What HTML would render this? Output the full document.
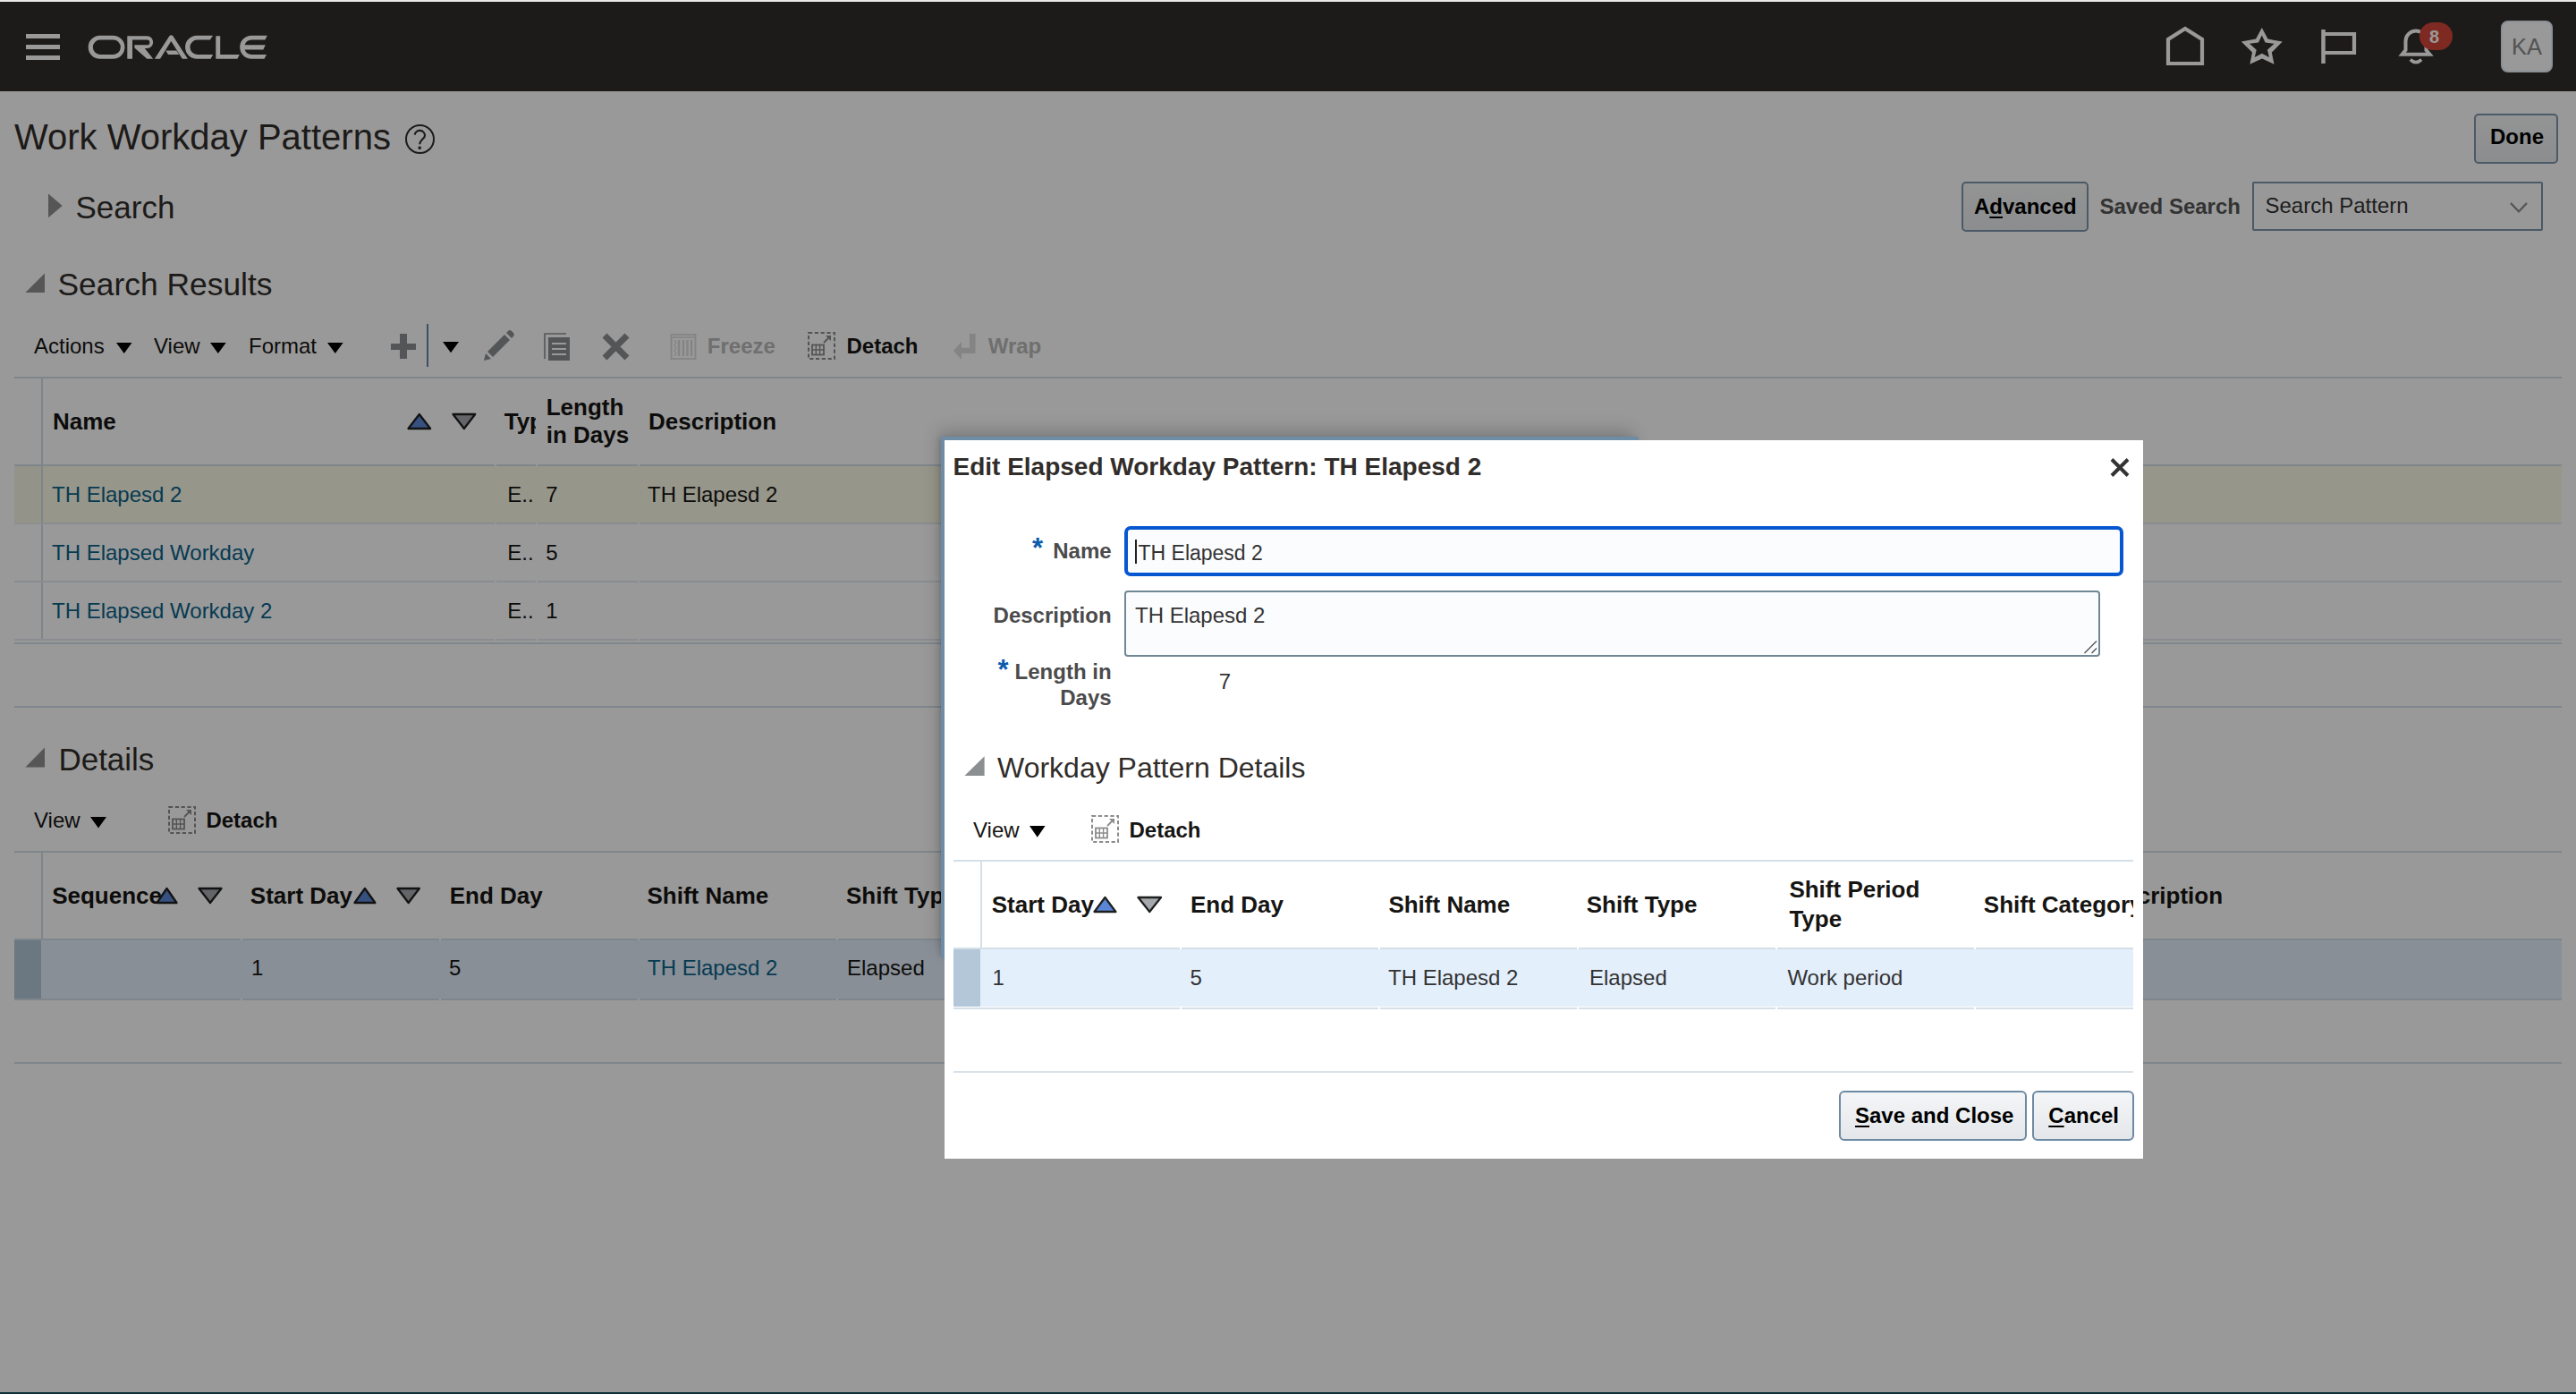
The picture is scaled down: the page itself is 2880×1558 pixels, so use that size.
<!DOCTYPE html>
<html><head><meta charset="utf-8"><title>Work Workday Patterns</title>
<style>
html,body{margin:0;padding:0;}
body{width:2880px;height:1558px;position:relative;overflow:hidden;background:#fff;font-family:'Liberation Sans', sans-serif;}
.t{position:absolute;white-space:nowrap;}
#page{position:absolute;left:0;top:0;width:2880px;height:1558px;}
</style></head><body>
<div id="page"><div style="position:absolute;left:0px;top:0px;width:2880px;height:102px;background:#312d2a"></div><div style="position:absolute;left:29px;top:38px;width:38px;height:4.5px;background:#fff"></div><div style="position:absolute;left:29px;top:50px;width:38px;height:4.5px;background:#fff"></div><div style="position:absolute;left:29px;top:62px;width:38px;height:4.5px;background:#fff"></div><svg style="position:absolute;left:98px;top:39px;" width="204" height="28" viewBox="0 0 204 28"><g fill="#fff">
<path fill-rule="evenodd" d="M13.7 0.74 H28.4 A13.03 13.03 0 0 1 28.4 26.8 H13.7 A13.03 13.03 0 0 1 13.7 0.74 Z M14 5.6 H28.7 A8.15 8.15 0 0 1 28.7 21.9 H14 A8.15 8.15 0 0 1 14 5.6 Z"/>
<path d="M44.3 1.15 H66.5 A6.93 6.93 0 0 1 66.5 15 H63.8 L73.2 26.8 H66.3 L52.4 14.6 V11.3 H66.5 A2.85 2.85 0 0 0 66.5 5.6 H50 V26.8 H44.3 Z"/>
<path d="M74.85 26.8 L91.4 1.2 Q93.4 -0.8 95.4 1.2 L111.9 26.8 H105.8 L93.3 6.9 L81 26.8 Z"/>
<path d="M87.3 17.5 H99.3 L102.2 21.9 H90 Z"/>
<path d="M140.1 0.74 H122.1 A13.03 13.03 0 0 0 122.1 26.8 H137.6 L140.1 21.9 H122.6 A8.15 8.15 0 0 1 122.6 5.6 H136.8 Z"/>
<path d="M143.3 1.15 H148.2 V21.9 H169.8 L167.4 26.8 H143.3 Z"/>
<path d="M200.8 0.74 H183.2 A13.03 13.03 0 0 0 183.2 26.8 H197.5 L200 21.9 H183.3 A8.15 8.15 0 0 1 175.6 16.6 H196.3 L198.8 11.3 H175.6 A8.15 8.15 0 0 1 183.3 5.6 H198.4 Z"/>
</g></svg><svg style="position:absolute;left:2418px;top:28px;" width="50" height="48" viewBox="0 0 50 48"><path d="M6 43 V16 L25 4 L44 16 V43 Z" fill="none" stroke="#fff" stroke-width="4.2"/></svg><svg style="position:absolute;left:2503px;top:28px;" width="52" height="48" viewBox="0 0 52 48"><path d="M25.80 3.10 L32.50 15.60 L48.80 18.50 L36.80 30.60 L39.50 43.80 L26.00 37.60 L12.40 43.80 L15.00 30.60 L2.80 18.50 L19.10 15.60 Z M25.80 11.58 L29.55 19.43 L39.60 20.82 L31.96 27.83 L34.02 36.00 L25.91 31.75 L17.76 36.00 L19.75 27.83 L12.00 20.82 L22.05 19.43 Z" fill="#fff" fill-rule="evenodd"/></svg><svg style="position:absolute;left:2592px;top:30px;" width="46" height="44" viewBox="0 0 46 44"><path d="M5.5 3 V41" stroke="#fff" stroke-width="4.5"/><path d="M7 8 H40 V29 H7" fill="none" stroke="#fff" stroke-width="4.2"/></svg><svg style="position:absolute;left:2680px;top:28px;" width="44" height="46" viewBox="0 0 44 46"><path d="M5.6 32.8 L9.5 28 V18 A11.5 11.5 0 0 1 32.5 18 V28 L36.5 32.8 Z" fill="none" stroke="#fff" stroke-width="4" stroke-linejoin="miter"/><path d="M14.8 38.6 Q21 44.6 27.2 38.6" fill="none" stroke="#fff" stroke-width="3.6"/></svg><div style="position:absolute;left:2705px;top:25px;width:37px;height:31px;border-radius:16px;background:#d3473a"></div><div class="t" style="left:2716.0px;top:31.1px;font-size:20px;line-height:20px;font-weight:700;color:#fff;">8</div><div style="position:absolute;left:2796px;top:23px;width:54px;height:54px;border-radius:8px;background:#fff;border:2px solid #e8f0f8"></div><div class="t" style="left:2808.0px;top:39.6px;font-size:25.5px;line-height:25.5px;font-weight:400;color:#8a8a8a;">KA</div><div class="t" style="left:16.0px;top:133.1px;font-size:40px;line-height:40px;font-weight:400;color:#312d2a;">Work Workday Patterns</div><div style="position:absolute;left:453px;top:139px;width:29px;height:29px;border-radius:50%;border:2.2px solid #312d2a"></div><svg style="position:absolute;left:459px;top:141px;" width="22" height="30" viewBox="0 0 22 30"><path d="M4.7 9.6 A5.7 5.7 0 0 1 16 10.4 C16 14.2 10.2 15.2 10.2 20.3" fill="none" stroke="#312d2a" stroke-width="2.2"/><path d="M10.2 22.1 L12.4 24.3 L10.2 26.5 L8 24.3 Z" fill="#312d2a"/></svg><div style="position:absolute;left:2766px;top:127px;width:90px;height:52px;border:2px solid #7d96ab;border-radius:5px;background:linear-gradient(#f6f7f8,#e9ebed)"></div><div class="t" style="left:2784.0px;top:141.2px;font-size:24px;line-height:24px;font-weight:700;color:#000;">Done</div><svg style="position:absolute;left:50px;top:214px;" width="24" height="32" viewBox="0 0 24 32"><path d="M4 2.6 L19.7 16 L4 29.3 Z" fill="#8f8f8f"/></svg><div class="t" style="left:84.5px;top:213.7px;font-size:35px;line-height:35px;font-weight:400;color:#312d2a;">Search</div><div style="position:absolute;left:2193px;top:203px;width:138px;height:52px;border:2px solid #7d96ab;border-radius:5px;background:linear-gradient(#f6f7f8,#e9ebed)"></div><div class="t" style="left:2207.0px;top:218.7px;font-size:24px;line-height:24px;font-weight:700;color:#000;">A<u style="text-underline-offset:3px">d</u>vanced</div><div class="t" style="left:2347.5px;top:218.7px;font-size:24px;line-height:24px;font-weight:700;color:#555;">Saved Search</div><div style="position:absolute;left:2518px;top:203px;width:321px;height:51px;border:2px solid #7d96ab;border-radius:2px;background:#fdfdfd"></div><div class="t" style="left:2532.5px;top:217.9px;font-size:24px;line-height:24px;font-weight:400;color:#333;">Search Pattern</div><svg style="position:absolute;left:2804px;top:224px;" width="24" height="18" viewBox="0 0 24 18"><path d="M3 3 L12 12.5 L21 3" fill="none" stroke="#8a8a8a" stroke-width="2.2"/></svg><svg style="position:absolute;left:26px;top:303px;" width="28" height="28" viewBox="0 0 28 28"><path d="M24 2.6 V24 H2.4 Z" fill="#8f8f8f"/></svg><div class="t" style="left:64.5px;top:300.8px;font-size:35.4px;line-height:35.4px;font-weight:400;color:#312d2a;">Search Results</div><div class="t" style="left:38.0px;top:374.9px;font-size:24px;line-height:24px;font-weight:400;color:#161513;">Actions</div><svg style="position:absolute;left:129px;top:382px;" width="19.5" height="14" viewBox="0 0 19.5 14"><path d="M1 1 H18.5 L9.75 13 Z" fill="#000"/></svg><div class="t" style="left:172.0px;top:374.9px;font-size:24px;line-height:24px;font-weight:400;color:#161513;">View</div><svg style="position:absolute;left:234px;top:382px;" width="19.69999999999999" height="14" viewBox="0 0 19.69999999999999 14"><path d="M1 1 H18.69999999999999 L9.849999999999994 13 Z" fill="#000"/></svg><div class="t" style="left:278.0px;top:374.9px;font-size:24px;line-height:24px;font-weight:400;color:#161513;">Format</div><svg style="position:absolute;left:365px;top:382px;" width="19.600000000000023" height="14" viewBox="0 0 19.600000000000023 14"><path d="M1 1 H18.600000000000023 L9.800000000000011 13 Z" fill="#000"/></svg><div style="position:absolute;left:437px;top:383.5px;width:28px;height:7.3px;background:#8b8e91"></div><div style="position:absolute;left:447px;top:373.3px;width:8px;height:27.7px;background:#8b8e91"></div><div style="position:absolute;left:477px;top:362px;width:2px;height:47.5px;background:#6684a5"></div><svg style="position:absolute;left:494px;top:380.7px;" width="20" height="14.300000000000011" viewBox="0 0 20 14.300000000000011"><path d="M1 1 H19 L10.0 13.300000000000011 Z" fill="#000"/></svg><svg style="position:absolute;left:538px;top:368px;" width="38" height="38" viewBox="0 0 38 38"><path d="M7 25 L26 6 L32 12 L13 31 Z" fill="#8b8e91"/><path d="M28 4 L30 2 A3 3 0 0 1 34 2 L36 4 A3 3 0 0 1 36 8 L34 10 Z" fill="#8b8e91"/><path d="M5 27 L11 33 L3 35 Z" fill="#8b8e91"/></svg><svg style="position:absolute;left:607px;top:371px;" width="32" height="34" viewBox="0 0 32 34"><path d="M2 30 V2 H26" fill="none" stroke="#8b8e91" stroke-width="1.6"/><rect x="6" y="6" width="24" height="26" fill="#8b8e91"/><path d="M10 13 H26 M10 19 H26 M10 25 H26" stroke="#fff" stroke-width="2"/></svg><svg style="position:absolute;left:672px;top:371px;" width="34" height="33" viewBox="0 0 34 33"><path d="M4 4 L29 29 M29 4 L4 29" stroke="#8b8e91" stroke-width="7"/></svg><svg style="position:absolute;left:749px;top:372px;" width="30" height="30" viewBox="0 0 30 30"><rect x="1.5" y="2" width="27" height="27" fill="none" stroke="#dcdcdc" stroke-width="1.8"/><path d="M1.5 5 H28.5" stroke="#dcdcdc" stroke-width="1.5"/><path d="M10 8 V26 M15 8 V26 M19.5 8 V26 M24 8 V26" stroke="#dcdcdc" stroke-width="2.4"/><path d="M5 8 L7 11 L5 14 L7 17 L5 20 L7 23 L5 26" fill="none" stroke="#dcdcdc" stroke-width="1.2"/></svg><div class="t" style="left:790.8px;top:374.9px;font-size:24px;line-height:24px;font-weight:700;color:#b9b9b9;">Freeze</div><svg style="position:absolute;left:903px;top:371px;" width="31" height="31" viewBox="0 0 31 31"><rect x="1" y="1" width="29" height="29" fill="none" stroke="#8c8c8c" stroke-width="2" stroke-dasharray="4.2 2.6"/><rect x="5" y="14.5" width="13" height="11" fill="none" stroke="#8c8c8c" stroke-width="1.8"/><path d="M9.3 14.5 V25.5 M13.6 14.5 V25.5 M5 20 H18" stroke="#8c8c8c" stroke-width="1.4"/><path d="M18 12 L25 5" stroke="#8c8c8c" stroke-width="1.8"/><path d="M20 4 H26 V10 Z" fill="#8c8c8c"/></svg><div class="t" style="left:946.5px;top:374.9px;font-size:24px;line-height:24px;font-weight:700;color:#161513;">Detach</div><svg style="position:absolute;left:1064px;top:372px;" width="30" height="30" viewBox="0 0 30 30"><path d="M20 1 H26.5 V23 H10 V16.7 H20 Z" fill="#dcdcdc"/><path d="M2 20 L11 10 V30 Z" fill="#dcdcdc"/></svg><div class="t" style="left:1104.7px;top:374.9px;font-size:24px;line-height:24px;font-weight:700;color:#b9b9b9;">Wrap</div><div style="position:absolute;left:16px;top:421px;width:2848px;height:2px;background:#d3dfea"></div><div style="position:absolute;left:46px;top:422px;width:2px;height:293px;background:#d3dfea"></div><div style="position:absolute;left:16px;top:519px;width:2848px;height:2px;background:#d3dfea"></div><div style="position:absolute;left:16px;top:521px;width:2848px;height:64px;background:#fbfae6"></div><div style="position:absolute;left:16px;top:584px;width:2848px;height:2px;background:#e4eaf0"></div><div style="position:absolute;left:16px;top:649px;width:2848px;height:2px;background:#e4eaf0"></div><div style="position:absolute;left:16px;top:714px;width:2848px;height:2px;background:#e4eaf0"></div><div style="position:absolute;left:16px;top:718px;width:2848px;height:2px;background:#d3dfea"></div><div style="position:absolute;left:16px;top:789px;width:2848px;height:2px;background:#d3dfea"></div><div style="position:absolute;left:46px;top:521px;width:2px;height:64px;background:#d3dfea"></div><div style="position:absolute;left:16px;top:521px;width:30px;height:64px;background:#f5f6e6"></div><div style="position:absolute;left:553px;top:519px;width:2px;height:2px;background:#fff"></div><div style="position:absolute;left:553px;top:584px;width:2px;height:2px;background:#fff"></div><div style="position:absolute;left:553px;top:649px;width:2px;height:2px;background:#fff"></div><div style="position:absolute;left:553px;top:714px;width:2px;height:2px;background:#fff"></div><div style="position:absolute;left:599px;top:519px;width:2px;height:2px;background:#fff"></div><div style="position:absolute;left:599px;top:584px;width:2px;height:2px;background:#fff"></div><div style="position:absolute;left:599px;top:649px;width:2px;height:2px;background:#fff"></div><div style="position:absolute;left:599px;top:714px;width:2px;height:2px;background:#fff"></div><div style="position:absolute;left:713px;top:519px;width:2px;height:2px;background:#fff"></div><div style="position:absolute;left:713px;top:584px;width:2px;height:2px;background:#fff"></div><div style="position:absolute;left:713px;top:649px;width:2px;height:2px;background:#fff"></div><div style="position:absolute;left:713px;top:714px;width:2px;height:2px;background:#fff"></div><div class="t" style="left:59.0px;top:458.0px;font-size:26px;line-height:26px;font-weight:700;color:#161513;">Name</div><svg style="position:absolute;left:453px;top:460px;" width="31.600000000000023" height="22" viewBox="0 0 31.600000000000023 22"><path d="M15.800000000000011 3 L28.100000000000023 19 H3.5 Z" fill="#5b86d6" stroke="#1f1f1f" stroke-width="2.3" stroke-linejoin="round"/></svg><svg style="position:absolute;left:503px;top:460px;" width="31.700000000000045" height="22" viewBox="0 0 31.700000000000045 22"><path d="M3.5 3 H28.200000000000045 L15.850000000000023 19 Z" fill="#a5a9ad" stroke="#1f1f1f" stroke-width="2.3" stroke-linejoin="round"/></svg><div style="position:absolute;left:553px;top:440px;width:46px;height:60px;overflow:hidden"><div class="t" style="left:10.7px;top:18px;font-size:26px;line-height:26px;font-weight:700;color:#161513">Type</div></div><div class="t" style="left:610.7px;top:441.5px;font-size:26px;line-height:26px;font-weight:700;color:#161513;">Length</div><div class="t" style="left:610.7px;top:473.0px;font-size:26px;line-height:26px;font-weight:700;color:#161513;">in Days</div><div class="t" style="left:725.0px;top:458.0px;font-size:26px;line-height:26px;font-weight:700;color:#161513;">Description</div><div class="t" style="left:58.0px;top:541.2px;font-size:24px;line-height:24px;font-weight:400;color:#0a6389;">TH Elapesd 2</div><div class="t" style="left:567.3px;top:541.2px;font-size:24px;line-height:24px;font-weight:400;color:#161513;">E..</div><div class="t" style="left:610.3px;top:541.2px;font-size:24px;line-height:24px;font-weight:400;color:#161513;">7</div><div class="t" style="left:58.0px;top:606.2px;font-size:24px;line-height:24px;font-weight:400;color:#0a6389;">TH Elapsed Workday</div><div class="t" style="left:567.3px;top:606.2px;font-size:24px;line-height:24px;font-weight:400;color:#161513;">E..</div><div class="t" style="left:610.3px;top:606.2px;font-size:24px;line-height:24px;font-weight:400;color:#161513;">5</div><div class="t" style="left:58.0px;top:671.2px;font-size:24px;line-height:24px;font-weight:400;color:#0a6389;">TH Elapsed Workday 2</div><div class="t" style="left:567.3px;top:671.2px;font-size:24px;line-height:24px;font-weight:400;color:#161513;">E..</div><div class="t" style="left:610.3px;top:671.2px;font-size:24px;line-height:24px;font-weight:400;color:#161513;">1</div><div class="t" style="left:724.0px;top:541.2px;font-size:24px;line-height:24px;font-weight:400;color:#161513;">TH Elapesd 2</div><svg style="position:absolute;left:26px;top:833px;" width="28" height="28" viewBox="0 0 28 28"><path d="M24 2.4 V24.4 H2.4 Z" fill="#8f8f8f"/></svg><div class="t" style="left:65.4px;top:831.2px;font-size:35px;line-height:35px;font-weight:400;color:#312d2a;">Details</div><div class="t" style="left:38.0px;top:904.5px;font-size:24px;line-height:24px;font-weight:400;color:#161513;">View</div><svg style="position:absolute;left:100px;top:911.5px;" width="20" height="14.5" viewBox="0 0 20 14.5"><path d="M1 1 H19 L10.0 13.5 Z" fill="#000"/></svg><svg style="position:absolute;left:188px;top:901px;" width="31" height="31" viewBox="0 0 31 31"><rect x="1" y="1" width="29" height="29" fill="none" stroke="#8c8c8c" stroke-width="2" stroke-dasharray="4.2 2.6"/><rect x="5" y="14.5" width="13" height="11" fill="none" stroke="#8c8c8c" stroke-width="1.8"/><path d="M9.3 14.5 V25.5 M13.6 14.5 V25.5 M5 20 H18" stroke="#8c8c8c" stroke-width="1.4"/><path d="M18 12 L25 5" stroke="#8c8c8c" stroke-width="1.8"/><path d="M20 4 H26 V10 Z" fill="#8c8c8c"/></svg><div class="t" style="left:230.4px;top:904.5px;font-size:24px;line-height:24px;font-weight:700;color:#161513;">Detach</div><div style="position:absolute;left:16px;top:951px;width:2848px;height:2px;background:#d3dfea"></div><div style="position:absolute;left:46px;top:952px;width:2px;height:98px;background:#d3dfea"></div><div style="position:absolute;left:16px;top:1049px;width:2848px;height:2px;background:#d3dfea"></div><div style="position:absolute;left:16px;top:1051px;width:2848px;height:65px;background:#e4effc"></div><div style="position:absolute;left:16px;top:1051px;width:30px;height:65px;background:#b3c7d8"></div><div style="position:absolute;left:16px;top:1116px;width:2848px;height:2px;background:#d3dfea"></div><div style="position:absolute;left:16px;top:1187px;width:2848px;height:2px;background:#d3dfea"></div><div style="position:absolute;left:269px;top:1049px;width:2px;height:2px;background:#fff"></div><div style="position:absolute;left:269px;top:1116px;width:2px;height:2px;background:#fff"></div><div style="position:absolute;left:491px;top:1049px;width:2px;height:2px;background:#fff"></div><div style="position:absolute;left:491px;top:1116px;width:2px;height:2px;background:#fff"></div><div style="position:absolute;left:713px;top:1049px;width:2px;height:2px;background:#fff"></div><div style="position:absolute;left:713px;top:1116px;width:2px;height:2px;background:#fff"></div><div style="position:absolute;left:935px;top:1049px;width:2px;height:2px;background:#fff"></div><div style="position:absolute;left:935px;top:1116px;width:2px;height:2px;background:#fff"></div><div class="t" style="left:58.2px;top:987.5px;font-size:26px;line-height:26px;font-weight:700;color:#161513;">Sequence</div><svg style="position:absolute;left:171.6px;top:990px;" width="29.0" height="22" viewBox="0 0 29.0 22"><path d="M14.5 3 L25.5 19 H3.5 Z" fill="#5b86d6" stroke="#1f1f1f" stroke-width="2.3" stroke-linejoin="round"/></svg><svg style="position:absolute;left:219px;top:990px;" width="32" height="22" viewBox="0 0 32 22"><path d="M3.5 3 H28.5 L16.0 19 Z" fill="#a5a9ad" stroke="#1f1f1f" stroke-width="2.3" stroke-linejoin="round"/></svg><div class="t" style="left:279.8px;top:987.5px;font-size:26px;line-height:26px;font-weight:700;color:#161513;">Start Day</div><svg style="position:absolute;left:392.5px;top:990px;" width="29.899999999999977" height="22" viewBox="0 0 29.899999999999977 22"><path d="M14.949999999999989 3 L26.399999999999977 19 H3.5 Z" fill="#5b86d6" stroke="#1f1f1f" stroke-width="2.3" stroke-linejoin="round"/></svg><svg style="position:absolute;left:441.3px;top:990px;" width="31.30000000000001" height="22" viewBox="0 0 31.30000000000001 22"><path d="M3.5 3 H27.80000000000001 L15.650000000000006 19 Z" fill="#a5a9ad" stroke="#1f1f1f" stroke-width="2.3" stroke-linejoin="round"/></svg><div class="t" style="left:502.7px;top:987.5px;font-size:26px;line-height:26px;font-weight:700;color:#161513;">End Day</div><div class="t" style="left:723.5px;top:987.5px;font-size:26px;line-height:26px;font-weight:700;color:#161513;">Shift Name</div><div class="t" style="left:946.0px;top:987.5px;font-size:26px;line-height:26px;font-weight:700;color:#161513;">Shift Type</div><div class="t" style="left:2342.0px;top:987.5px;font-size:26px;line-height:26px;font-weight:700;color:#161513;">Description</div><div class="t" style="left:281.0px;top:1070.1px;font-size:24px;line-height:24px;font-weight:400;color:#161513;">1</div><div class="t" style="left:502.0px;top:1070.1px;font-size:24px;line-height:24px;font-weight:400;color:#161513;">5</div><div class="t" style="left:724.0px;top:1070.1px;font-size:24px;line-height:24px;font-weight:400;color:#0a6389;">TH Elapesd 2</div><div class="t" style="left:947.0px;top:1070.1px;font-size:24px;line-height:24px;font-weight:400;color:#161513;">Elapsed</div></div><div style="position:absolute;left:0px;top:0px;width:2880px;height:1558px;background:rgba(0,0,0,0.4)"></div><div style="position:absolute;left:0px;top:0px;width:2880px;height:2px;background:#e9e9e9"></div><div style="position:absolute;left:0px;top:1556px;width:2880px;height:2px;background:#0a2f36"></div><div style="position:absolute;left:1052px;top:488px;width:776px;height:578px;border:4px solid #6f8ca6;border-right:none;border-bottom:none;box-shadow:-4px -8px 18px -2px rgba(0,0,0,0.2),-3px 0 5px -1px rgba(0,0,0,0.12)"></div><div style="position:absolute;left:1056px;top:492px;width:1340px;height:803px;background:#fff"></div><div class="t" style="left:1065.5px;top:508.3px;font-size:28px;line-height:28px;font-weight:700;color:#312d2a;">Edit Elapsed Workday Pattern: TH Elapesd 2</div><svg style="position:absolute;left:2357px;top:510px;" width="26" height="25" viewBox="0 0 26 25"><path d="M4 3.5 L22 21.5 M22 3.5 L4 21.5" stroke="#333" stroke-width="4"/></svg><div class="t" style="left:1154.0px;top:597.3px;font-size:31px;line-height:31px;font-weight:700;color:#0b5cad;">*</div><div class="t" style="left:1242.6px;top:604.4px;font-size:24px;line-height:24px;font-weight:700;color:#4b4b4b;transform:translateX(-100%)">Name</div><div style="position:absolute;left:1257px;top:588px;width:1109px;height:48px;border:4px solid #0757d0;border-radius:7px;background:#fbfcfe"></div><div style="position:absolute;left:1268.5px;top:603px;width:2px;height:27px;background:#222"></div><div class="t" style="left:1272.5px;top:606.5px;font-size:23px;line-height:23px;font-weight:400;color:#333;">TH Elapesd 2</div><div class="t" style="left:1242.6px;top:676.2px;font-size:24px;line-height:24px;font-weight:700;color:#4b4b4b;transform:translateX(-100%)">Description</div><div style="position:absolute;left:1257px;top:660px;width:1087px;height:70px;border:2px solid #708794;border-radius:4px;background:#fbfcfe"></div><svg style="position:absolute;left:2329px;top:714px;" width="16" height="17" viewBox="0 0 16 17"><path d="M1.5 16 L15 2.5 M9.5 16 L15 10.5" stroke="#555" stroke-width="1.4"/></svg><div class="t" style="left:1269.0px;top:676.2px;font-size:24px;line-height:24px;font-weight:400;color:#333;">TH Elapesd 2</div><div class="t" style="left:1115.5px;top:733.1px;font-size:31px;line-height:31px;font-weight:700;color:#0b5cad;">*</div><div class="t" style="left:1242.6px;top:738.7px;font-size:24px;line-height:24px;font-weight:700;color:#4b4b4b;transform:translateX(-100%)">Length in</div><div class="t" style="left:1242.6px;top:768.2px;font-size:24px;line-height:24px;font-weight:700;color:#4b4b4b;transform:translateX(-100%)">Days</div><div class="t" style="left:1362.8px;top:750.2px;font-size:24px;line-height:24px;font-weight:400;color:#333;">7</div><svg style="position:absolute;left:1076px;top:843px;" width="28" height="28" viewBox="0 0 28 28"><path d="M24.6 2.3 V24 H2.4 Z" fill="#8b8f92"/></svg><div class="t" style="left:1115.0px;top:842.3px;font-size:32px;line-height:32px;font-weight:400;color:#312d2a;">Workday Pattern Details</div><div class="t" style="left:1088.0px;top:915.7px;font-size:24px;line-height:24px;font-weight:400;color:#161513;">View</div><svg style="position:absolute;left:1150.4px;top:922.3px;" width="19.59999999999991" height="14.700000000000045" viewBox="0 0 19.59999999999991 14.700000000000045"><path d="M1 1 H18.59999999999991 L9.799999999999955 13.700000000000045 Z" fill="#000"/></svg><svg style="position:absolute;left:1220px;top:911px;" width="31" height="31" viewBox="0 0 31 31"><rect x="1" y="1" width="29" height="29" fill="none" stroke="#8c8c8c" stroke-width="2" stroke-dasharray="4.2 2.6"/><rect x="5" y="14.5" width="13" height="11" fill="none" stroke="#8c8c8c" stroke-width="1.8"/><path d="M9.3 14.5 V25.5 M13.6 14.5 V25.5 M5 20 H18" stroke="#8c8c8c" stroke-width="1.4"/><path d="M18 12 L25 5" stroke="#8c8c8c" stroke-width="1.8"/><path d="M20 4 H26 V10 Z" fill="#8c8c8c"/></svg><div class="t" style="left:1262.5px;top:915.7px;font-size:24px;line-height:24px;font-weight:700;color:#161513;">Detach</div><div style="position:absolute;left:1066px;top:961px;width:1319px;height:2px;background:#d5dfe8"></div><div style="position:absolute;left:1096px;top:962px;width:2px;height:98px;background:#d5dfe8"></div><div style="position:absolute;left:1066px;top:1059px;width:1319px;height:2px;background:#d5dfe8"></div><div style="position:absolute;left:1066px;top:1061px;width:1319px;height:64px;background:#e4effc"></div><div style="position:absolute;left:1066px;top:1061px;width:30px;height:64px;background:#b3c7d8"></div><div style="position:absolute;left:1066px;top:1126px;width:1319px;height:2px;background:#d5dfe8"></div><div style="position:absolute;left:1319px;top:1059px;width:2px;height:2px;background:#fff"></div><div style="position:absolute;left:1319px;top:1126px;width:2px;height:2px;background:#fff"></div><div style="position:absolute;left:1541px;top:1059px;width:2px;height:2px;background:#fff"></div><div style="position:absolute;left:1541px;top:1126px;width:2px;height:2px;background:#fff"></div><div style="position:absolute;left:1763px;top:1059px;width:2px;height:2px;background:#fff"></div><div style="position:absolute;left:1763px;top:1126px;width:2px;height:2px;background:#fff"></div><div style="position:absolute;left:1985px;top:1059px;width:2px;height:2px;background:#fff"></div><div style="position:absolute;left:1985px;top:1126px;width:2px;height:2px;background:#fff"></div><div style="position:absolute;left:2207px;top:1059px;width:2px;height:2px;background:#fff"></div><div style="position:absolute;left:2207px;top:1126px;width:2px;height:2px;background:#fff"></div><div class="t" style="left:1108.7px;top:997.7px;font-size:26px;line-height:26px;font-weight:700;color:#161513;">Start Day</div><svg style="position:absolute;left:1219.8px;top:1000px;" width="30.90000000000009" height="22" viewBox="0 0 30.90000000000009 22"><path d="M15.450000000000045 3 L27.40000000000009 19 H3.5 Z" fill="#5b86d6" stroke="#1f1f1f" stroke-width="2.3" stroke-linejoin="round"/></svg><svg style="position:absolute;left:1269px;top:1000px;" width="32.5" height="22" viewBox="0 0 32.5 22"><path d="M3.5 3 H29.0 L16.25 19 Z" fill="#a5a9ad" stroke="#1f1f1f" stroke-width="2.3" stroke-linejoin="round"/></svg><div class="t" style="left:1331.0px;top:997.7px;font-size:26px;line-height:26px;font-weight:700;color:#161513;">End Day</div><div class="t" style="left:1552.4px;top:997.7px;font-size:26px;line-height:26px;font-weight:700;color:#161513;">Shift Name</div><div class="t" style="left:1773.7px;top:997.7px;font-size:26px;line-height:26px;font-weight:700;color:#161513;">Shift Type</div><div class="t" style="left:2000.4px;top:981.4px;font-size:26px;line-height:26px;font-weight:700;color:#161513;">Shift Period</div><div class="t" style="left:2000.4px;top:1014.0px;font-size:26px;line-height:26px;font-weight:700;color:#161513;">Type</div><div style="position:absolute;left:2207px;top:980px;width:178px;height:60px;overflow:hidden"><div class="t" style="left:10.8px;top:17.7px;font-size:26px;line-height:26px;font-weight:700;color:#161513">Shift Category</div></div><div class="t" style="left:1109.4px;top:1081.4px;font-size:24px;line-height:24px;font-weight:400;color:#333;">1</div><div class="t" style="left:1330.4px;top:1081.4px;font-size:24px;line-height:24px;font-weight:400;color:#333;">5</div><div class="t" style="left:1552.0px;top:1081.4px;font-size:24px;line-height:24px;font-weight:400;color:#333;">TH Elapesd 2</div><div class="t" style="left:1777.0px;top:1081.4px;font-size:24px;line-height:24px;font-weight:400;color:#333;">Elapsed</div><div class="t" style="left:1998.4px;top:1081.4px;font-size:24px;line-height:24px;font-weight:400;color:#333;">Work period</div><div style="position:absolute;left:1066px;top:1197px;width:1319px;height:2px;background:#d6e1ea"></div><div style="position:absolute;left:2056px;top:1219px;width:206px;height:52px;border:2px solid #6d8aa4;border-radius:6px;background:linear-gradient(#f4f5f7,#e4e7ea)"></div><div class="t" style="left:2074.0px;top:1235.0px;font-size:24px;line-height:24px;font-weight:700;color:#000;"><u style="text-underline-offset:3px">S</u>ave and Close</div><div style="position:absolute;left:2272px;top:1219px;width:110px;height:52px;border:2px solid #6d8aa4;border-radius:6px;background:linear-gradient(#f4f5f7,#e4e7ea)"></div><div class="t" style="left:2290.3px;top:1235.0px;font-size:24px;line-height:24px;font-weight:700;color:#000;"><u style="text-underline-offset:3px">C</u>ancel</div>
</body></html>
